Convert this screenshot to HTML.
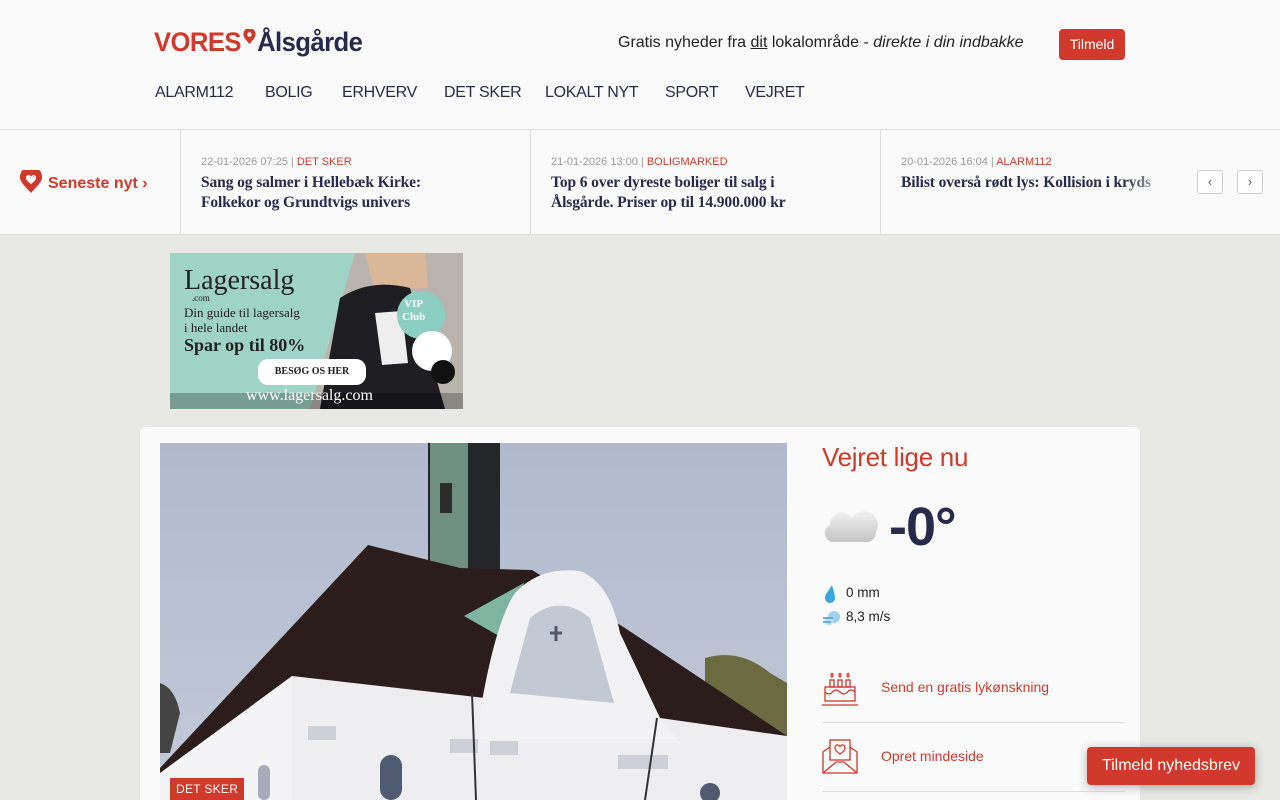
<!DOCTYPE html>
<html><head><meta charset="utf-8"><style>
*{box-sizing:border-box;margin:0;padding:0}
html,body{width:1280px;height:800px;overflow:hidden}
body{background:#e8e8e4;font-family:"Liberation Sans",sans-serif;color:#272a4a;position:relative}
.hdr{background:#fafafa;height:130px;position:relative;border-bottom:1px solid #ddd}
.logo{position:absolute;left:154px;top:27px;font-size:27px;font-weight:bold;letter-spacing:-0.6px;transform:scaleX(.95);transform-origin:left;white-space:nowrap}
.logo .v{color:#d0392b}
.tag{position:absolute;left:618px;top:34px;font-size:16px;color:#222}
.btn{position:absolute;left:1059px;top:29px;width:66px;height:31px;background:#d0392b;color:#fff;border-radius:4px;font-size:14px;text-align:center;line-height:31px}
.nav span{position:absolute;top:84px;font-size:16px;color:#272a4a;letter-spacing:-0.3px}
.tick{background:#fafafa;height:105px;position:relative;border-bottom:1px solid #ddd}
.sen{position:absolute;left:20px;top:40px;color:#d0392b;font-weight:bold;font-size:16px}
.it{position:absolute;top:0;height:105px;border-left:1px solid #ddd;padding:26px 0 0 20px;width:350px}
.meta{font-size:11px;color:#999}.meta b{color:#d0392b;font-weight:normal}
.ttl{font-family:"Liberation Serif",serif;font-weight:bold;font-size:15.5px;line-height:20px;margin-top:5px;color:#272a4a;letter-spacing:-0.1px}
.arr{position:absolute;top:170px;width:26px;height:24px;border:1px solid #ccc;border-radius:3px;background:#fff;text-align:center;font-size:13px;line-height:22px;color:#555}
.ad{position:absolute;left:170px;top:253px;width:293px;height:156px;background:#9fd3c6;overflow:hidden}
.card{position:absolute;left:140px;top:427px;width:1000px;height:373px;background:#fafafa;border-radius:6px 6px 0 0}
.img{position:absolute;left:160px;top:443px;width:627px;height:357px;overflow:hidden}
.w{position:absolute;left:822px}
.lnk{color:#d0392b;font-size:14px;position:absolute;left:881px}
.hr{position:absolute;left:822px;width:303px;height:1px;background:#ddd}
.nl{position:absolute;left:1087px;top:747px;width:168px;height:38px;background:#d0392b;color:#fff;border-radius:4px;font-size:16px;text-align:center;line-height:38px;box-shadow:0 2px 10px rgba(0,0,0,.3)}
</style></head><body>
<div class="hdr">
<div class="logo"><span class="v">VORES</span><svg width="13" height="16" viewBox="0 0 13 16" style="vertical-align:6px;margin:0 2px"><path d="M6.5 15C2 10 0 8 0 5.5A6.5 6.5 0 0 1 13 5.5C13 8 11 10 6.5 15Z" fill="#d0392b"/><circle cx="6.5" cy="5.5" r="2.3" fill="#fafafa"/></svg>Ålsgårde</div>
<div class="tag">Gratis nyheder fra <u>dit</u> lokalområde - <i>direkte i din indbakke</i></div>
<div class="btn">Tilmeld</div>
<div class="nav"><span style="left:155px">ALARM112</span><span style="left:265px">BOLIG</span><span style="left:342px">ERHVERV</span><span style="left:444px">DET SKER</span><span style="left:545px">LOKALT NYT</span><span style="left:665px">SPORT</span><span style="left:745px">VEJRET</span></div>
</div>
<div class="tick">
<div class="sen"><svg width="22" height="24" viewBox="0 0 22 24" style="vertical-align:-6px;margin-right:6px"><path d="M11 23C4 15 0 12 0 7A7 7 0 0 1 22 7C22 12 18 15 11 23Z" fill="#d0392b"/><path d="M11 14C7 11 6 9.5 6 8a2.5 2.5 0 0 1 5-1a2.5 2.5 0 0 1 5 1c0 1.5-1 3-5 6Z" fill="#fff"/></svg>Seneste nyt ›</div>
<div class="it" style="left:180px"><div class="meta">22-01-2026 07:25 | <b>DET SKER</b></div><div class="ttl">Sang og salmer i Hellebæk Kirke:<br>Folkekor og Grundtvigs univers</div></div>
<div class="it" style="left:530px"><div class="meta">21-01-2026 13:00 | <b>BOLIGMARKED</b></div><div class="ttl">Top 6 over dyreste boliger til salg i<br>Ålsgårde. Priser op til 14.900.000 kr</div></div>
<div class="it" style="left:880px;width:295px;overflow:hidden;white-space:nowrap"><div class="meta">20-01-2026 16:04 | <b>ALARM112</b></div><div class="ttl">Bilist overså rødt lys: Kollision i kryds</div><div style="position:absolute;right:0;top:40px;width:50px;height:30px;background:linear-gradient(90deg,rgba(250,250,250,0),#fafafa)"></div></div>
</div>
<div class="arr" style="left:1197px">‹</div><div class="arr" style="left:1237px">›</div>
<div class="ad">
<svg style="position:absolute;left:0;top:0" width="293" height="156" viewBox="0 0 293 156"><polygon points="185,0 293,0 293,156 140,156" fill="#b9b4ae"/><polygon points="195,0 255,0 258,35 205,38" fill="#d9b89a"/><path d="M170 45Q200 25 240 35L275 156H150Z" fill="#1d1d22"/><path d="M205 60L232 58L238 110L212 112Z" fill="#eee"/><circle cx="251" cy="62" r="24" fill="#8ccfc2"/><circle cx="262" cy="98" r="20" fill="#fff"/><circle cx="273" cy="119" r="12" fill="#111"/><rect x="0" y="140" width="293" height="16" fill="rgba(0,0,0,.25)"/></svg>
<div style="position:absolute;left:14px;top:12px;font-family:'Liberation Serif',serif;font-size:28px;color:#222">Lagersalg</div><div style="position:absolute;left:22px;top:40px;font-family:'Liberation Serif',serif;font-size:9px;color:#222">.com</div><div style="position:absolute;left:14px;top:52px;font-family:'Liberation Serif',serif;font-size:13px;color:#222;line-height:15px">Din guide til lagersalg<br>i hele landet</div><div style="position:absolute;left:14px;top:82px;font-family:'Liberation Serif',serif;font-size:18px;font-weight:bold;color:#222">Spar op til 80%</div><div style="position:absolute;left:88px;top:106px;width:108px;height:26px;background:#fff;border-radius:10px;font-family:'Liberation Serif',serif;font-size:10px;font-weight:bold;text-align:center;line-height:26px;color:#222">BESØG OS HER</div><div style="position:absolute;left:76px;top:134px;font-family:'Liberation Serif',serif;font-size:16px;color:#fff">www.lagersalg.com</div><div style="position:absolute;left:232px;top:45px;font-family:'Liberation Serif',serif;font-size:11px;font-weight:bold;color:#fff;text-align:center;line-height:13px">VIP<br>Club</div></div>
<div class="card"></div>
<div class="img"><svg width="627" height="357" viewBox="0 0 627 357"><defs><linearGradient id="s" x1="0" y1="0" x2="0" y2="1"><stop offset="0" stop-color="#b0b9cc"/><stop offset="1" stop-color="#c3cad8"/></linearGradient></defs><rect width="627" height="357" fill="url(#s)"/>
<rect x="268" y="0" width="72" height="150" fill="#24262a"/><rect x="270" y="0" width="38" height="140" fill="#6f8f80"/><rect x="280" y="40" width="12" height="30" fill="#2a2d2a"/>
<path d="M545 215Q580 205 610 230L627 240V357H545Z" fill="#6b6a40"/><path d="M0 240Q15 245 20 270L10 310H0Z" fill="#444"/>
<polygon points="0,325 208,102 300,125 372,127 465,185 627,293 627,357 0,357" fill="#2b1d1c"/>
<polygon points="0,330 132,233 132,357 0,357" fill="#f4f4f6"/>
<polygon points="132,233 500,275 627,293 627,357 132,357" fill="#eeeef0"/>
<path d="M304 173L364 140L346 197Z" fill="#7fb5a0"/>
<path d="M320 270Q335 180 355 150Q380 123 420 128Q450 140 460 190L500 275L520 300H320Z" fill="#f2f2f4"/>
<path d="M350 250L370 175Q400 150 430 175L454 260Z" fill="#c3c9d3"/>
<path d="M390 190h12M396 183v15" stroke="#556" stroke-width="3"/>
<rect x="220" y="312" width="22" height="45" rx="11" fill="#505a70"/><rect x="98" y="322" width="12" height="35" rx="6" fill="#aab"/><rect x="540" y="340" width="20" height="20" rx="10" fill="#505a70"/>
<rect x="148" y="283" width="28" height="14" fill="#cdd0d6"/><rect x="290" y="296" width="28" height="14" fill="#cdd0d6"/><rect x="330" y="298" width="28" height="14" fill="#cdd0d6"/><rect x="458" y="312" width="50" height="14" fill="#cdd0d6"/>
<path d="M312 250L316 357" stroke="#333" stroke-width="2"/><path d="M497 275L485 357" stroke="#333" stroke-width="2"/></svg><div style="position:absolute;left:10px;bottom:0;background:#d0392b;color:#fff;font-size:12px;padding:4px 6px;letter-spacing:.3px">DET SKER</div></div>
<div class="w" style="top:442px;color:#d0392b;font-size:26px;letter-spacing:-0.3px">Vejret lige nu</div>
<svg class="w" style="top:508px" width="56" height="36" viewBox="0 0 56 36"><defs><linearGradient id="c" x1="0" y1="0" x2="0" y2="1"><stop offset="0" stop-color="#f2f2f2"/><stop offset="1" stop-color="#c4c4c4"/></linearGradient></defs><path d="M10 34A9 9 0 0 1 8 17A12 12 0 0 1 30 10A13 13 0 0 1 54 24A10 10 0 0 1 46 34Z" fill="url(#c)"/></svg>
<div class="w" style="left:889px;top:496px;font-size:54px;font-weight:bold;color:#272a4a;letter-spacing:-1px">-0°</div>
<svg class="w" style="top:584px" width="16" height="20" viewBox="0 0 16 20"><path d="M10 1C6 8 3 10 3 14A5 5 0 0 0 13 14C13 10 11.5 7 10 1Z" fill="#3aa6dd"/></svg>
<div class="w" style="left:846px;top:585px;font-size:13.5px;color:#222">0 mm</div>
<svg class="w" style="top:609px" width="20" height="18" viewBox="0 0 20 18"><circle cx="12" cy="8" r="6" fill="#9fd0ee"/><circle cx="7" cy="12" r="4.5" fill="#bfe0f4"/><path d="M1 9h10M1 13h8" stroke="#3a9ad6" stroke-width="1.5"/></svg>
<div class="w" style="left:846px;top:609px;font-size:13.5px;color:#222">8,3 m/s</div>
<svg class="w" style="top:670px" width="36" height="36" viewBox="0 0 36 36" fill="none" stroke="#d0392b" stroke-width="1.3"><rect x="3" y="17" width="30" height="14"/><rect x="8" y="10" width="4" height="7"/><rect x="16" y="10" width="4" height="7"/><rect x="24" y="10" width="4" height="7"/><path d="M10 3q-2 3 0 4q2-1 0-4M18 3q-2 3 0 4q2-1 0-4M26 3q-2 3 0 4q2-1 0-4"/><path d="M3 22q4 4 7.5 0t7.5 0t7.5 0t7.5 0M0 35h36"/></svg>
<div class="lnk" style="top:679px">Send en gratis lykønskning</div>
<div class="hr" style="top:722px"></div>
<svg class="w" style="top:738px" width="36" height="36" viewBox="0 0 36 36" fill="none" stroke="#d0392b" stroke-width="1.3"><path d="M1 14V35H35V14L18 2Z"/><path d="M1 35L14 24M35 35L22 24M14 24h8"/><rect x="8" y="2" width="20" height="20" fill="#fafafa"/><path d="M18 16c-4-3-5-4-5-6a2.5 2.5 0 0 1 5-1a2.5 2.5 0 0 1 5 1c0 2-1 3-5 6Z"/></svg>
<div class="lnk" style="top:748px">Opret mindeside</div>
<div class="hr" style="top:791px"></div>
<div class="nl">Tilmeld nyhedsbrev</div>
</body></html>
